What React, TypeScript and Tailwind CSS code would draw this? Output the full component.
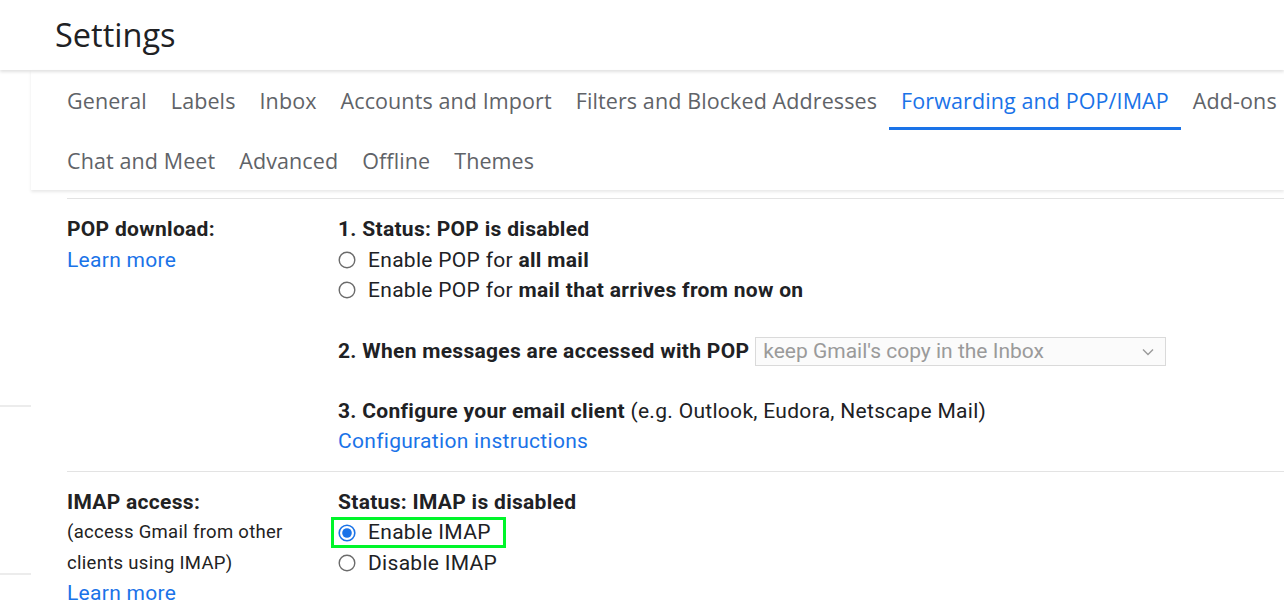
import React from "react";

const tabs1 = [
  "General",
  "Labels",
  "Inbox",
  "Accounts and Import",
  "Filters and Blocked Addresses",
  "Forwarding and POP/IMAP",
  "Add-ons",
];
const tabs2 = ["Chat and Meet", "Advanced", "Offline", "Themes"];

function Radio({ checked }: { checked?: boolean }) {
  return (
    <svg width="20" height="20" viewBox="0 0 20 20" className="shrink-0">
      {checked ? (
        <>
          <circle cx="10" cy="10" r="7.8" fill="white" stroke="#1a73e8" strokeWidth="1.6" />
          <circle cx="10" cy="10" r="4.8" fill="#1a73e8" />
        </>
      ) : (
        <circle cx="10" cy="10" r="7.8" fill="white" stroke="#6b6b6b" strokeWidth="1.4" />
      )}
    </svg>
  );
}

function Tab({ label, active }: { label: string; active?: boolean }) {
  return (
    <div
      className={
        "h-[60px] px-[12px] flex items-center relative whitespace-nowrap " +
        (active ? "text-[#1a73e8]" : "text-[#5f6368]")
      }
    >
      <span className="pt-[3px]">{label}</span>
      {active && <div className="absolute left-0 right-0 bottom-0 h-[3px] bg-[#1a73e8]" />}
    </div>
  );
}

export default function App() {
  return (
    <div
      className="w-[1284px] h-[613px] overflow-hidden bg-white flex"
      style={{ fontFamily: "Roboto, 'Liberation Sans', sans-serif" }}
    >
      {/* left sidebar remnant */}
      <div className="w-[31px] shrink-0 flex flex-col">
        <div className="h-[405px]" />
        <div className="h-[2px] bg-[#ececec]" />
        <div className="h-[166px]" />
        <div className="h-[2px] bg-[#ececec]" />
      </div>

      <div className="flex-1 flex flex-col min-w-0">
        {/* header */}
        <div className="h-[70px] -ml-[31px] pl-[55px] flex items-center shadow-[0_2px_3px_rgba(0,0,0,0.12)] relative z-10">
          <span
            className="text-[32.5px] text-[#202124] leading-none pt-[1px]"
            style={{ fontFamily: "'Open Sans', Roboto, sans-serif" }}
          >
            Settings
          </span>
        </div>

        {/* tabs */}
        <div
          className="pl-[24px] text-[21.5px] tracking-[0.1px] shadow-[0_2px_3px_rgba(0,0,0,0.09)] relative z-10"
          style={{ fontFamily: "'Open Sans', Roboto, sans-serif" }}
        >
          <div className="flex">
            {tabs1.map((t) => (
              <Tab key={t} label={t} active={t === "Forwarding and POP/IMAP"} />
            ))}
          </div>
          <div className="flex">
            {tabs2.map((t) => (
              <Tab key={t} label={t} />
            ))}
          </div>
        </div>

        {/* content */}
        <div className="pl-[36px] pt-[8px] text-[21px] tracking-[0.3px] text-[#202124]">
          <div className="border-t border-[#e3e3e3] pt-[15px] pb-[14px] flex">
            <div className="w-[271px] shrink-0 leading-[30.5px]">
              <div className="font-bold text-[#222]">POP download:</div>
              <div className="text-[#1a73e8]">Learn more</div>
            </div>
            <div className="leading-[30.5px]">
              <div className="font-bold">1. Status: POP is disabled</div>
              <div className="flex items-center gap-[11px] -ml-[1px]">
                <Radio />
                <span>
                  Enable POP for <b>all mail</b>
                </span>
              </div>
              <div className="flex items-center gap-[11px] -ml-[1px]">
                <Radio />
                <span>
                  Enable POP for <b>mail that arrives from now on</b>
                </span>
              </div>
              <div className="h-[30px]" />
              <div className="flex items-center h-[32px]">
                <b>2. When messages are accessed with POP</b>
                <div className="ml-[6px] w-[411px] h-[29px] border border-[#dadada] bg-[#fbfbfb] flex items-center justify-between pl-[7px] pr-[10px] text-[#9a9a9a] tracking-normal">
                  <span className="leading-none">keep Gmail's copy in the Inbox</span>
                  <svg width="14" height="10" viewBox="0 0 14 10">
                    <path d="M2 2.5 L7 7.5 L12 2.5" fill="none" stroke="#9a9a9a" strokeWidth="1.4" />
                  </svg>
                </div>
              </div>
              <div className="h-[28px]" />
              <div>
                <b>3. Configure your email client</b> (e.g. Outlook, Eudora, Netscape Mail)
              </div>
              <div className="text-[#1a73e8]">Configuration instructions</div>
            </div>
          </div>

          <div className="border-t border-[#e3e3e3] pt-[15px] flex">
            <div className="w-[271px] shrink-0 leading-[30.5px]">
              <div className="font-bold text-[#222]">IMAP access:</div>
              <div className="text-[18.5px] text-[#222]">(access Gmail from other</div>
              <div className="text-[18.5px] text-[#222]">clients using IMAP)</div>
              <div className="text-[#1a73e8]">Learn more</div>
            </div>
            <div className="leading-[30.5px]">
              <div className="font-bold">Status: IMAP is disabled</div>
              <div className="-ml-[7px] w-[175px] h-[31px] border-[3px] border-[#00f52a] flex items-center gap-[11px] pl-[3px]">
                <Radio checked />
                <span>Enable IMAP</span>
              </div>
              <div className="flex items-center gap-[11px] -ml-[1px]">
                <Radio />
                <span>Disable IMAP</span>
              </div>
            </div>
          </div>
        </div>
      </div>
    </div>
  );
}
